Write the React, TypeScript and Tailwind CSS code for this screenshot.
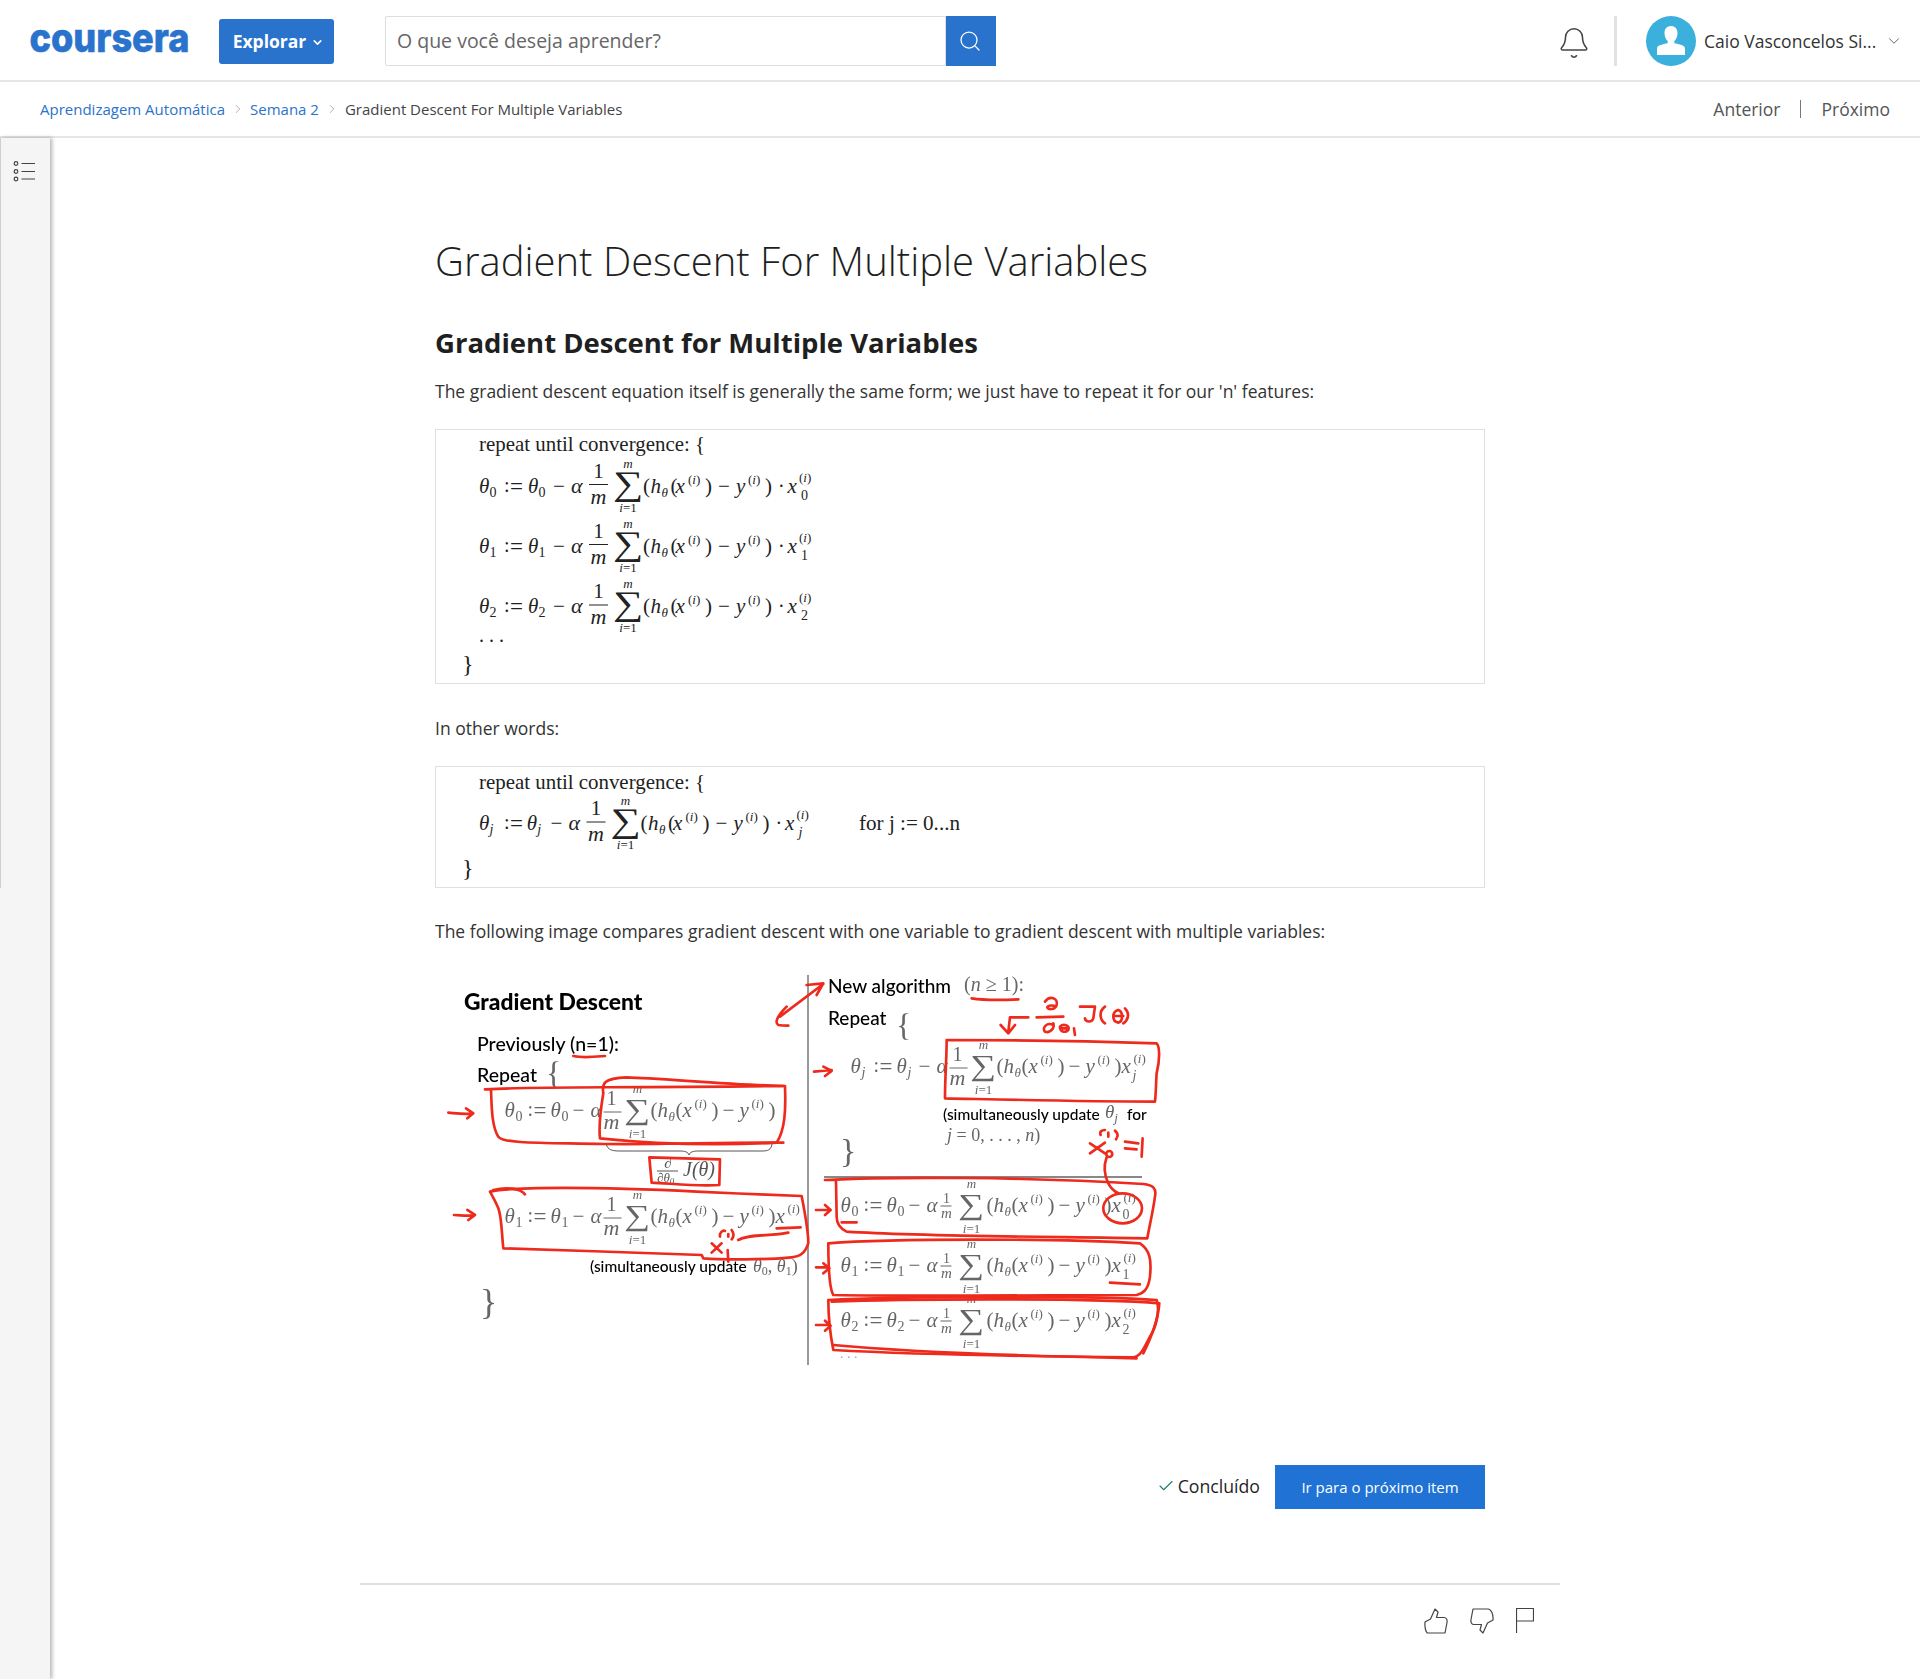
import React from "react";
import { Search, Bell, ChevronDown, ChevronRight, Check } from "lucide-react";

const INK = "#222";

function T({ x, y, s = 20, i = false, a, children, f, w }: { x: number; y: number; s?: number; i?: boolean; a?: "middle"; children: React.ReactNode; f?: string; w?: number }) {
  return (
    <text x={x} y={y} fontSize={s} fontStyle={i ? "italic" : "normal"} textAnchor={a} fill={f} textLength={w} lengthAdjust={w ? "spacingAndGlyphs" : undefined}>
      {children}
    </text>
  );
}

function SumSign({ cx, y, s, f }: { cx: number; y: number; s: number; f?: string }) {
  return (
    <g transform={`translate(${cx} ${y}) scale(1.25 1)`}>
      <text x={0} y={0} fontSize={s} textAnchor="middle" fill={f}>∑</text>
    </g>
  );
}

function Assign({ x, b, f }: { x: number; b: number; f?: string }) {
  return (
    <g>
      <T x={x} y={b - 1} s={20} f={f}>:</T>
      <T x={x + 6} y={b + 1} s={23} f={f}>=</T>
    </g>
  );
}

function Row({ b, sub, dx = 0 }: { b: number; sub: string; dx?: number }) {
  const ital = sub === "j";
  return (
    <g>
      <T x={479} y={b} i s={21}>θ</T>
      <T x={489.5} y={b + 4} s={14} i={ital}>{sub}</T>
      <Assign x={504} b={b} />
      <T x={528 + dx / 2} y={b} i s={21}>θ</T>
      <T x={538.5 + dx / 2} y={b + 4} s={14} i={ital}>{sub}</T>
      <T x={553 + dx} y={b} s={21}>−</T>
      <T x={571 + dx} y={b} i s={22}>α</T>
      <T x={598.5 + dx} y={b - 15} s={21} a="middle">1</T>
      <line x1={589 + dx} x2={608 + dx} y1={b - 8} y2={b - 8} stroke={INK} strokeWidth={1} />
      <T x={598.5 + dx} y={b + 11} i s={22} a="middle">m</T>
      <T x={628 + dx} y={b - 25} s={13} i a="middle">m</T>
      <SumSign cx={628 + dx} y={b + 2} s={34} />
      <T x={628 + dx} y={b + 19} s={13} a="middle"><tspan fontStyle="italic">i</tspan>=1</T>
      <T x={643 + dx} y={b} s={21}>(</T>
      <T x={650.5 + dx} y={b} i s={21}>h</T>
      <T x={661.5 + dx} y={b + 4} i s={13}>θ</T>
      <T x={670.5 + dx} y={b} s={21}>(</T>
      <T x={675.5 + dx} y={b} i s={21}>x</T>
      <T x={688 + dx} y={b - 9} s={13}>(<tspan fontStyle="italic">i</tspan>)</T>
      <T x={705 + dx} y={b} s={21}>)</T>
      <T x={718 + dx} y={b} s={21}>−</T>
      <T x={736 + dx} y={b} i s={21}>y</T>
      <T x={748 + dx} y={b - 9} s={13}>(<tspan fontStyle="italic">i</tspan>)</T>
      <T x={765 + dx} y={b} s={21}>)</T>
      <T x={778 + dx} y={b} s={20}>·</T>
      <T x={787.5 + dx} y={b} i s={21}>x</T>
      <T x={799 + dx} y={b - 11} s={13}>(<tspan fontStyle="italic">i</tspan>)</T>
      <T x={801 + dx} y={b + 7} s={14} i={ital}>{sub}</T>
    </g>
  );
}

function FormulaOne() {
  return (
    <svg viewBox="436 431 1048 253" className="block h-full w-full font-['Liberation_Serif'] fill-[#222]">
      <T x={479} y={452} s={21} w={226}>repeat until convergence: {"{"}</T>
      <Row b={493.5} sub="0" />
      <Row b={553.5} sub="1" />
      <Row b={614} sub="2" />
      <T x={479} y={643} s={20}>. . .</T>
      <T x={462} y={673} s={24}>{"}"}</T>
    </svg>
  );
}

function FormulaTwo() {
  return (
    <svg viewBox="436 767 1048 120" className="block h-full w-full font-['Liberation_Serif'] fill-[#222]">
      <T x={479} y={789} s={21} w={226}>repeat until convergence: {"{"}</T>
      <Row b={830} sub="j" dx={-2.5} />
      <T x={859} y={830} s={21} w={101}>for j := 0...n</T>
      <T x={462} y={876} s={24}>{"}"}</T>
    </svg>
  );
}

function GrayRow({ x, b, sub, small = false, xi = true, end }: { x: number; b: number; sub: string; small?: boolean; xi?: boolean; end?: string }) {
  const d = x - 1.5;
  const g = "#666";
  const ital = sub === "j";
  const cx = d + (small ? 131 : 133);
  return (
    <g>
      <T x={d} y={b} i s={21} f={g}>θ</T>
      <T x={d + 11} y={b + 4} s={14} i={ital} f={g}>{sub}</T>
      <Assign x={d + 23} b={b} f={g} />
      <T x={d + 46} y={b} i s={21} f={g}>θ</T>
      <T x={d + 57} y={b + 4} s={14} i={ital} f={g}>{sub}</T>
      <T x={d + 68} y={b} s={21} f={g}>−</T>
      <T x={d + 86} y={b} i s={21} f={g}>α</T>
      {small ? (
        <g>
          <T x={d + 106} y={b - 9} s={14} a="middle" f={g}>1</T>
          <line x1={d + 100} x2={d + 111} y1={b - 6} y2={b - 6} stroke={g} />
          <T x={d + 106} y={b + 6} s={15} i a="middle" f={g}>m</T>
        </g>
      ) : (
        <g>
          <T x={d + 107} y={b - 12} s={20} a="middle" f={g}>1</T>
          <line x1={d + 99} x2={d + 117} y1={b - 5} y2={b - 5} stroke={g} />
          <T x={d + 107} y={b + 12} s={22} i a="middle" f={g}>m</T>
        </g>
      )}
      <T x={cx} y={b - 24} s={13} i a="middle" f={g}>m</T>
      <SumSign cx={cx} y={b + 2} s={29} f={g} />
      <T x={cx} y={b + 21} s={13} a="middle" f={g}><tspan fontStyle="italic">i</tspan>=1</T>
      <T x={d + 146} y={b} s={21} f={g}>(</T>
      <T x={d + 153} y={b} i s={21} f={g}>h</T>
      <T x={d + 164} y={b + 4} i s={13} f={g}>θ</T>
      <T x={d + 171} y={b} s={21} f={g}>(</T>
      <T x={d + 178} y={b} i s={21} f={g}>x</T>
      <T x={d + 190} y={b - 9} s={13} f={g}>(<tspan fontStyle="italic">i</tspan>)</T>
      <T x={d + 207} y={b} s={21} f={g}>)</T>
      <T x={d + 218} y={b} s={21} f={g}>−</T>
      <T x={d + 235} y={b} i s={21} f={g}>y</T>
      <T x={d + 247} y={b - 9} s={13} f={g}>(<tspan fontStyle="italic">i</tspan>)</T>
      <T x={d + 264} y={b} s={21} f={g}>)</T>
      {xi && <T x={d + 271} y={b} i s={21} f={g}>x</T>}
      {xi && <T x={d + 283} y={b - 10} s={13} f={g}>(<tspan fontStyle="italic">i</tspan>)</T>}
      {end && <T x={d + 282} y={b + 7} s={14} i={ital} f={g}>{end}</T>}
    </g>
  );
}

function Figure() {
  const red = { fill: "none", stroke: "#ee2a1d", strokeWidth: 8, strokeLinecap: "round" as const, strokeLinejoin: "round" as const };
  return (
    <svg viewBox="430 960 770 420" className="block h-[420px] w-[770px] font-['Lato'] blur-[0.35px]">
      <T x={464} y={1010} s={22.8} f="#000"><tspan fontWeight={900}>Gradient Descent</tspan></T>
      <T x={477} y={1051} s={19.5} f="#000"><tspan fontWeight={500}>Previously (n=1):</tspan></T>
      <T x={477} y={1082} s={19.5} f="#000"><tspan fontWeight={500}>Repeat</tspan></T>
      <g className="font-['Liberation_Serif']">
        <T x={546} y={1084} s={32} f="#666">{"{"}</T>
        <GrayRow x={506} b={1117} sub="0" xi={false} />
        <GrayRow x={506} b={1223} sub="1" />
        <T x={480} y={1314} s={36} f="#666">{"}"}</T>
        <T x={896} y={1036} s={32} f="#666">{"{"}</T>
        <GrayRow x={852} b={1073} sub="j" end="j" />
        <T x={840} y={1162} s={34} f="#666">{"}"}</T>
        <T x={964} y={991} s={21} f="#666" w={60}>(<tspan fontStyle="italic">n</tspan> ≥ 1):</T>
        <T x={1105} y={1118} s={19} i f="#666">θ<tspan fontSize={13} dy={4}>j</tspan></T>
        <T x={947} y={1141} s={18} f="#666"><tspan fontStyle="italic">j</tspan> = 0, . . . , <tspan fontStyle="italic">n</tspan>)</T>
        <GrayRow x={842} b={1212} sub="0" small end="0" />
        <GrayRow x={842} b={1272} sub="1" small end="1" />
        <GrayRow x={842} b={1327} sub="2" small end="2" />
        <T x={840} y={1358} s={14} f="#aaa">. . .</T>
        <T x={753} y={1272} s={18} f="#666"><tspan fontStyle="italic">θ</tspan><tspan fontSize={12} dy={3}>0</tspan><tspan dy={-3}>, </tspan><tspan fontStyle="italic">θ</tspan><tspan fontSize={12} dy={3}>1</tspan><tspan dy={-3}>)</tspan></T>
        <T x={668} y={1168} s={15} i a="middle" f="#555">∂</T>
        <line x1={657} x2={678} y1={1171} y2={1171} stroke="#555" />
        <T x={657} y={1182} s={13} i f="#555">∂θ<tspan fontSize={9} dy={2}>0</tspan></T>
        <T x={683} y={1176} s={20} i f="#555">J(θ)</T>
      </g>
      <T x={590} y={1272} s={15.5} f="#000"><tspan fontWeight={500}>(simultaneously update</tspan></T>
      <T x={828} y={993} s={19} f="#000"><tspan fontWeight={500}>New algorithm</tspan></T>
      <T x={828} y={1025} s={19} f="#000"><tspan fontWeight={500}>Repeat</tspan></T>
      <T x={943} y={1120} s={15.5} f="#000"><tspan fontWeight={500}>(simultaneously update</tspan></T>
      <T x={1127} y={1120} s={15.5} f="#000"><tspan fontWeight={500}>for</tspan></T>
      <rect x={807} y={975} width={2} height={390} fill="#999" />
      <rect x={824} y={1176} width={318} height={2} fill="#888" />
      <path d="M606 1144C608 1150 612 1151 620 1151H680C685 1151 688 1152 689 1155C690 1152 693 1151 698 1151H762C768 1151 771 1150 772 1144" fill="none" stroke="#555" strokeWidth="1" />
      <g transform="translate(430 960) scale(0.3333)" {...red}>
        <path d="M55 458C80 460 110 464 128 460M108 445L130 460L112 475" />
        <path d="M165 388C350 378 500 385 1060 378M183 388C185 440 185 500 205 530C220 552 350 548 520 552C700 555 900 545 1060 548" />
        <path d="M520 400C515 370 520 355 590 352C700 355 900 375 1065 378C1068 450 1065 510 1040 548C900 555 700 555 510 535C505 490 515 430 520 400" />
        <path d="M430 288C460 295 500 290 525 288" />
        <path d="M658 592L870 598L868 675C800 680 720 670 665 668Z" />
        <path d="M180 695C240 680 500 680 800 695C900 700 1050 705 1115 708C1125 760 1135 810 1135 850C1125 880 1110 890 1085 892C1000 900 880 900 820 895L815 885C650 880 400 870 220 865C215 820 215 770 205 745C195 720 185 705 180 695" />
        <path d="M190 690C230 680 270 685 285 703" />
        <path d="M72 765C90 765 115 770 133 765M112 750L135 765L115 780" />
        <path d="M1040 805L1112 802M925 840C960 820 1020 830 1075 818" />
        <path d="M845 850L875 878M875 850L845 878M870 830C868 818 878 810 885 813M895 822L895 830M905 810C912 820 912 830 905 838M893 870L895 905" />
        <path d="M1180 72L1050 170M1130 75L1180 70L1160 105M1070 140C1050 160 1030 185 1045 195C1055 197 1065 197 1075 197" />
      </g>
      <g transform="translate(790 960) scale(0.3333)" {...red}>
        <path d="M545 115C590 122 640 120 685 118" />
        <path d="M715 172L660 172L655 215M632 195L655 220L675 195" />
        <path d="M765 125C780 105 805 115 800 135C795 150 775 150 772 142C775 135 790 135 797 140M740 172L820 170" />
        <path d="M790 195C770 185 755 205 765 215C780 220 795 205 790 190M810 200C820 190 840 195 835 210C825 220 810 215 810 200M812 205L835 205M852 205L855 225" />
        <path d="M870 140L915 140L910 175C905 190 885 185 885 175M945 140C925 155 930 180 945 190M985 150C965 155 965 185 985 188C1000 185 1000 155 985 150M970 168L1000 168M1005 145C1020 160 1015 180 1000 190" />
        <path d="M470 240C600 240 800 240 1100 250C1110 260 1110 300 1100 340C1098 370 1098 400 1095 425C900 425 700 420 465 415C465 350 470 300 470 240" />
        <path d="M72 335L125 330M100 320L125 333L105 348" />
        <path d="M900 550L945 580M900 580L945 548M932 525C928 515 935 510 945 510M955 518L955 530M975 512C985 520 985 530 978 538M1005 545L1045 550M1005 565L1040 568M1058 535L1055 590" />
        <ellipse cx="998" cy="745" rx="58" ry="45" />
        <circle cx="958" cy="582" r="9" />
        <path d="M950 592C940 620 945 650 955 670C965 690 975 695 985 700" />
        <path d="M105 660C300 650 700 650 1060 672C1090 675 1100 685 1095 710C1090 750 1080 790 1072 835C800 830 400 830 170 815C150 805 140 790 140 770L138 665" />
        <path d="M155 787L200 787M78 750L120 750M105 735L122 750L105 765" />
        <path d="M115 850C300 835 800 835 1050 850C1080 870 1085 900 1080 950C1075 990 1060 1000 1040 1005C800 1005 400 1010 130 1005C115 980 115 900 115 850" />
        <path d="M960 968L1050 973M78 922L115 922M100 910L118 925L100 940" />
        <path d="M115 1020C300 1010 900 1005 1100 1020C1110 1050 1100 1100 1080 1130C1060 1170 1050 1190 1030 1192C800 1190 400 1185 130 1170C120 1120 115 1060 115 1020" />
        <path d="M125 1025C300 1018 900 1012 1108 1030C1105 1070 1090 1120 1060 1180M130 1155C400 1180 800 1190 1040 1195" />
        <path d="M78 1095L120 1095M105 1082L122 1097L105 1112" />
      </g>
    </svg>
  );
}

function Avatar() {
  return (
    <svg viewBox="0 0 50 50" className="h-[50px] w-[50px] shrink-0">
      <circle cx="25" cy="25" r="25" fill="#3cb0dc" />
      <path d="M25 10c4.200 0 6.500 3 6.500 7.200 0 3.300-1.400 6.400-3.200 7.800v2.200c4.600.9 10.700 1.800 10.700 5.300V39H11v-6.500c0-3.500 6.100-4.400 10.700-5.300V25c-1.800-1.400-3.200-4.500-3.200-7.800C18.500 13 20.800 10 25 10z" fill="#fff" />
    </svg>
  );
}

export default function App() {
  return (
    <div className="flex h-[1679px] w-[1920px] flex-col overflow-hidden bg-white font-['Open_Sans',sans-serif] text-[#1f1f1f]">
      <header className="flex h-[82px] shrink-0 items-center border-b-2 border-[#e5e5e5] pl-[29px] pr-[17px] pt-[2px]">
        <svg viewBox="0 0 160 34" className="h-[34px] w-[161px] shrink-0 overflow-visible">
          <text x="0" y="28" fontSize="40" fontWeight={800} fill="#2a73cc" stroke="#2a73cc" strokeWidth="0.6" textLength="160" lengthAdjust="spacingAndGlyphs" className="font-['Inter']">coursera</text>
        </svg>
        <button className="ml-[29px] flex h-[45px] w-[115px] items-center justify-center gap-[5px] rounded-[3px] bg-[#2a73cc] pl-[4px] text-[17.500px] font-bold text-white">
          Explorar
          <ChevronDown size={13} strokeWidth={3} className="mt-[3px]" />
        </button>
        <div className="ml-[51px] flex h-[50px] w-[611px] items-stretch">
          <div className="flex flex-1 items-center rounded-l-[2px] border border-[#dedede] pb-[1px] pl-[11px] text-[19.500px] text-[#666]">O que você deseja aprender?</div>
          <div className="flex w-[50px] items-center justify-center bg-[#2a73cc] pr-[3px]">
            <Search size={24} strokeWidth={1.25} className="text-white" />
          </div>
        </div>
        <div className="flex-1" />
        <Bell size={34} strokeWidth={1.1} className="mt-[3px] text-[#444]" />
        <div className="ml-[23px] h-[50px] w-[3px] bg-[#e1e1e1]" />
        <div className="ml-[29px] flex items-center">
          <Avatar />
          <span className="ml-[8px] w-[172px] text-[17.500px] whitespace-nowrap text-[#333]">Caio Vasconcelos Si...</span>
          <ChevronDown size={18} strokeWidth={1.1} className="ml-[9px] text-[#444]" />
        </div>
      </header>

      <div className="flex h-[56px] shrink-0 items-center justify-between border-b-2 border-[#e5e5e5] pl-[40px] pr-[30px]">
        <div className="flex items-center text-[15px]">
          <a className="text-[#2a73cc]">Aprendizagem Automática</a>
          <ChevronRight size={14} strokeWidth={1} className="ml-[6px] mr-[5px] text-[#777]" />
          <a className="text-[#2a73cc]">Semana 2</a>
          <ChevronRight size={14} strokeWidth={1} className="ml-[6px] mr-[6px] text-[#777]" />
          <span className="text-[#444]">Gradient Descent For Multiple Variables</span>
        </div>
        <div className="flex items-center text-[17.500px] text-[#555]">
          <span>Anterior</span>
          <span className="mx-[20px] h-[18px] w-px bg-[#777]" />
          <span>Próximo</span>
        </div>
      </div>

      <div className="flex flex-1">
        <aside className="relative w-[50px] shrink-0 bg-[#f5f5f5] shadow-[2px_0_4px_rgba(0,0,0,0.3)]">
          <div className="h-[750px] border-l border-[#cfcfcf] pl-[12px] pt-[22px]">
            <svg viewBox="0 0 22 22" className="h-[22px] w-[22px]" fill="none" stroke="#444" strokeWidth="1.2">
              <circle cx="3" cy="3.500" r="1.800" />
              <circle cx="3" cy="11.500" r="1.800" />
              <circle cx="3" cy="19" r="1.800" />
              <path d="M8.500 3.500H22M8.500 11.500H22M8.500 19H22" />
            </svg>
          </div>
        </aside>
        <main className="ml-[310px] w-[1200px]">
          <div className="px-[75px]">
            <h1 className="mt-[95px] text-[40px] leading-[56px] font-light text-[#1f1f1f]">Gradient Descent For Multiple Variables</h1>
            <h2 className="mt-[35px] text-[27.500px] leading-[38px] font-bold text-[#1f1f1f]">Gradient Descent for Multiple Variables</h2>
            <p className="mt-[15px] text-[17.500px] leading-[28px] text-[#333]">The gradient descent equation itself is generally the same form; we just have to repeat it for our 'n' features:</p>
            <div className="mt-[24px] h-[255px] border border-[#e0e0e0]"><FormulaOne /></div>
            <p className="mt-[30px] text-[17.500px] leading-[28px] text-[#333]">In other words:</p>
            <div className="mt-[24px] h-[122px] border border-[#e0e0e0]"><FormulaTwo /></div>
            <p className="mt-[29px] text-[17.500px] leading-[28px] text-[#333]">The following image compares gradient descent with one variable to gradient descent with multiple variables:</p>
            <div className="ml-[-5px] mt-[15px]"><Figure /></div>
            <div className="mt-[85px] flex items-center justify-end">
              <Check size={18} strokeWidth={1.5} className="mb-[2px] text-[#1d7c78]" />
              <span className="mb-[2px] ml-[3px] mr-px text-[17.700px] text-[#1f1f1f]">Concluído</span>
              <button className="ml-[14px] h-[44px] w-[210px] bg-[#2073d4] text-[15px] font-medium text-white">Ir para o próximo item</button>
            </div>
          </div>
          <div className="mt-[74px] flex justify-end gap-[22px] border-t-2 border-[#e0e0e0] pr-[26px] pt-[23px]">
            <svg viewBox="0 0 24 26" className="h-[26px] w-[24px]" fill="none" stroke="#444" strokeWidth="1.2" strokeLinejoin="round">
              <path d="M1 14L6.500 11L11 1L14 4L12.500 9.500H20C22.500 9.500 23.500 12 23 14.500L21 25H4C2 25 .5 20 1 14Z" />
            </svg>
            <svg viewBox="0 0 24 26" className="h-[26px] w-[24px]" fill="none" stroke="#444" strokeWidth="1.2" strokeLinejoin="round">
              <path d="M23 12L17.500 15L13 25L10 22L11.500 16.500H4C1.500 16.500 .5 14 1 11.500L3 1H18C21 1 23.500 6 23 12Z" />
            </svg>
            <svg viewBox="0 0 18 26" className="h-[26px] w-[18px]" fill="none" stroke="#444" strokeWidth="1.2">
              <path d="M.5 25V.5H17.500V13H.5" />
            </svg>
          </div>
        </main>
      </div>
    </div>
  );
}
